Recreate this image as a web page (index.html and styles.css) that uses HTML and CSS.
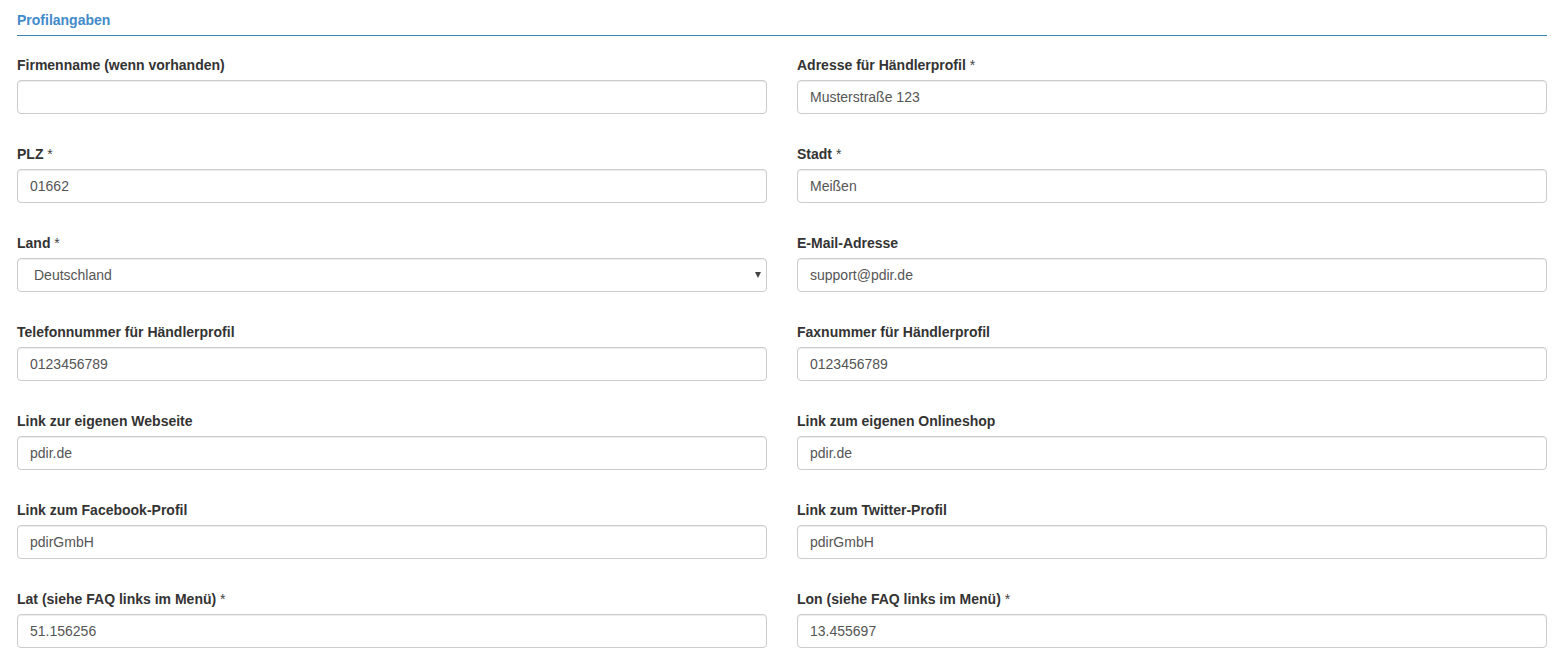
FILE: index.html
```html
<!DOCTYPE html>
<html lang="de">
<head>
<meta charset="utf-8">
<title>Profilangaben</title>
<link rel="stylesheet" href="styles.css">
</head>
<body>
<div class="page">
  <h3 class="section-title">Profilangaben</h3>
  <form class="form-grid">
    <div class="form-group">
      <label>Firmenname (wenn vorhanden)</label>
      <input class="form-control" type="text" value="">
    </div>
    <div class="form-group">
      <label>Adresse für Händlerprofil <span class="req">*</span></label>
      <input class="form-control" type="text" value="Musterstraße 123">
    </div>
    <div class="form-group">
      <label>PLZ <span class="req">*</span></label>
      <input class="form-control" type="text" value="01662">
    </div>
    <div class="form-group">
      <label>Stadt <span class="req">*</span></label>
      <input class="form-control" type="text" value="Meißen">
    </div>
    <div class="form-group">
      <label>Land <span class="req">*</span></label>
      <div class="select-wrap">
        <select class="form-control select"><option>Deutschland</option></select>
      </div>
    </div>
    <div class="form-group">
      <label>E-Mail-Adresse</label>
      <input class="form-control" type="text" value="support@pdir.de">
    </div>
    <div class="form-group">
      <label>Telefonnummer für Händlerprofil</label>
      <input class="form-control" type="text" value="0123456789">
    </div>
    <div class="form-group">
      <label>Faxnummer für Händlerprofil</label>
      <input class="form-control" type="text" value="0123456789">
    </div>
    <div class="form-group">
      <label>Link zur eigenen Webseite</label>
      <input class="form-control" type="text" value="pdir.de">
    </div>
    <div class="form-group">
      <label>Link zum eigenen Onlineshop</label>
      <input class="form-control" type="text" value="pdir.de">
    </div>
    <div class="form-group">
      <label>Link zum Facebook-Profil</label>
      <input class="form-control" type="text" value="pdirGmbH">
    </div>
    <div class="form-group">
      <label>Link zum Twitter-Profil</label>
      <input class="form-control" type="text" value="pdirGmbH">
    </div>
    <div class="form-group">
      <label>Lat (siehe FAQ links im Menü) <span class="req">*</span></label>
      <input class="form-control" type="text" value="51.156256">
    </div>
    <div class="form-group">
      <label>Lon (siehe FAQ links im Menü) <span class="req">*</span></label>
      <input class="form-control" type="text" value="13.455697">
    </div>
  </form>
</div>
</body>
</html>
```
FILE: styles.css
```css
* { box-sizing: border-box; }
html, body {
  margin: 0;
  padding: 0;
  background: #fff;
  font-family: "Liberation Sans", Arial, Helvetica, sans-serif;
  font-size: 14px;
  line-height: 20px;
  color: #333;
}
.page {
  width: 1547px;
  padding: 10px 0 0 17px;
}
.section-title {
  margin: 0;
  font-size: 14px;
  font-weight: bold;
  line-height: 20px;
  color: #428bca;
  padding-bottom: 5px;
  border-bottom: 1px solid #3b82b0;
}
.form-grid {
  margin: 19px 0 0;
  display: grid;
  grid-template-columns: 750px 750px;
  column-gap: 30px;
  row-gap: 30px;
}
.form-group {
  display: flex;
  flex-direction: column;
}
.form-group label {
  font-weight: bold;
  line-height: 20px;
  margin-bottom: 5px;
  color: #333;
}
.req {
  font-weight: normal;
  color: #444;
}
.form-control {
  display: block;
  width: 100%;
  height: 34px;
  padding: 6px 12px;
  font-family: inherit;
  font-size: 14px;
  line-height: 20px;
  color: #555;
  background: #fff;
  border: 1px solid #ccc;
  border-radius: 4px;
  box-shadow: inset 0 1px 1px rgba(0,0,0,.075);
  margin: 0;
}
.select-wrap {
  position: relative;
}
.select {
  appearance: none;
  -webkit-appearance: none;
  padding-left: 12px;
  text-indent: 4px;
}
.select-wrap::after {
  content: "";
  position: absolute;
  right: 6px;
  top: 14px;
  border-left: 3px solid transparent;
  border-right: 3px solid transparent;
  border-top: 6px solid #444;
}
```
